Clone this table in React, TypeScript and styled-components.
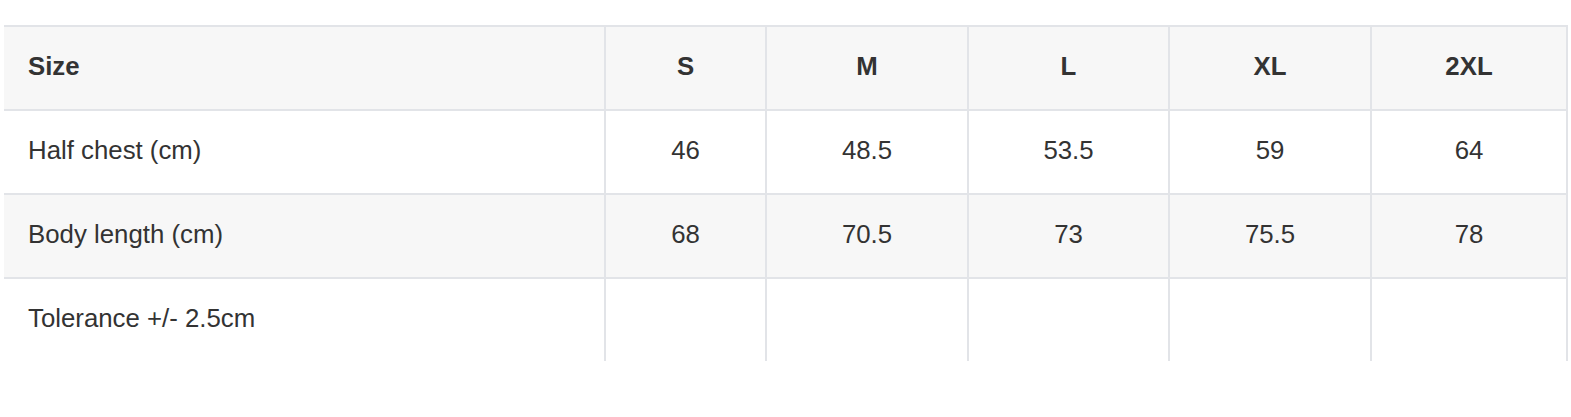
import styled, { createGlobalStyle } from 'styled-components'

const GlobalStyle = createGlobalStyle`
  body {
    margin: 0;
    background: #ffffff;
    font-family: "Liberation Sans", Arial, sans-serif;
    color: #333333;
  }
`

const Wrapper = styled.div`
  padding: 25px 0 0 4px;
`

const SizeTable = styled.table`
  width: 1564px;
  table-layout: fixed;
  border-collapse: separate;
  border-spacing: 0;
  font-size: 25.8px;
`

const Row = styled.tr<{ $shaded?: boolean }>`
  background: ${(p) => (p.$shaded ? '#f7f7f7' : '#ffffff')};
`

const Cell = styled.td<{ $head?: boolean; $label?: boolean }>`
  box-sizing: border-box;
  height: 84px;
  padding: 0 ${(p) => (p.$label ? '24px' : '0')} 3px;
  border-top: 2px solid #e2e4e8;
  border-right: 2px solid #e2e4e8;
  text-align: ${(p) => (p.$label ? 'left' : 'center')};
  vertical-align: middle;
  font-weight: ${(p) => (p.$head ? 700 : 400)};
  color: #333333;
  white-space: nowrap;
`

const widths = [602, 161, 202, 201, 202, 196]
const sizes = ['S', 'M', 'L', 'XL', '2XL']

const rows: { label: string; values: string[] }[] = [
  { label: 'Half chest (cm)', values: ['46', '48.5', '53.5', '59', '64'] },
  { label: 'Body length (cm)', values: ['68', '70.5', '73', '75.5', '78'] },
  { label: 'Tolerance +/- 2.5cm', values: ['', '', '', '', ''] },
]

export default function App() {
  return (
    <>
      <GlobalStyle />
      <Wrapper>
        <SizeTable>
          <colgroup>
            {widths.map((w, i) => (
              <col key={i} style={{ width: w }} />
            ))}
          </colgroup>
          <thead>
            <Row $shaded>
              <Cell as="th" $head $label>
                Size
              </Cell>
              {sizes.map((s) => (
                <Cell as="th" $head key={s}>
                  {s}
                </Cell>
              ))}
            </Row>
          </thead>
          <tbody>
            {rows.map((r, i) => (
              <Row key={r.label} $shaded={i % 2 === 1}>
                <Cell $label>{r.label}</Cell>
                {r.values.map((v, j) => (
                  <Cell key={j}>{v}</Cell>
                ))}
              </Row>
            ))}
          </tbody>
        </SizeTable>
      </Wrapper>
    </>
  )
}
